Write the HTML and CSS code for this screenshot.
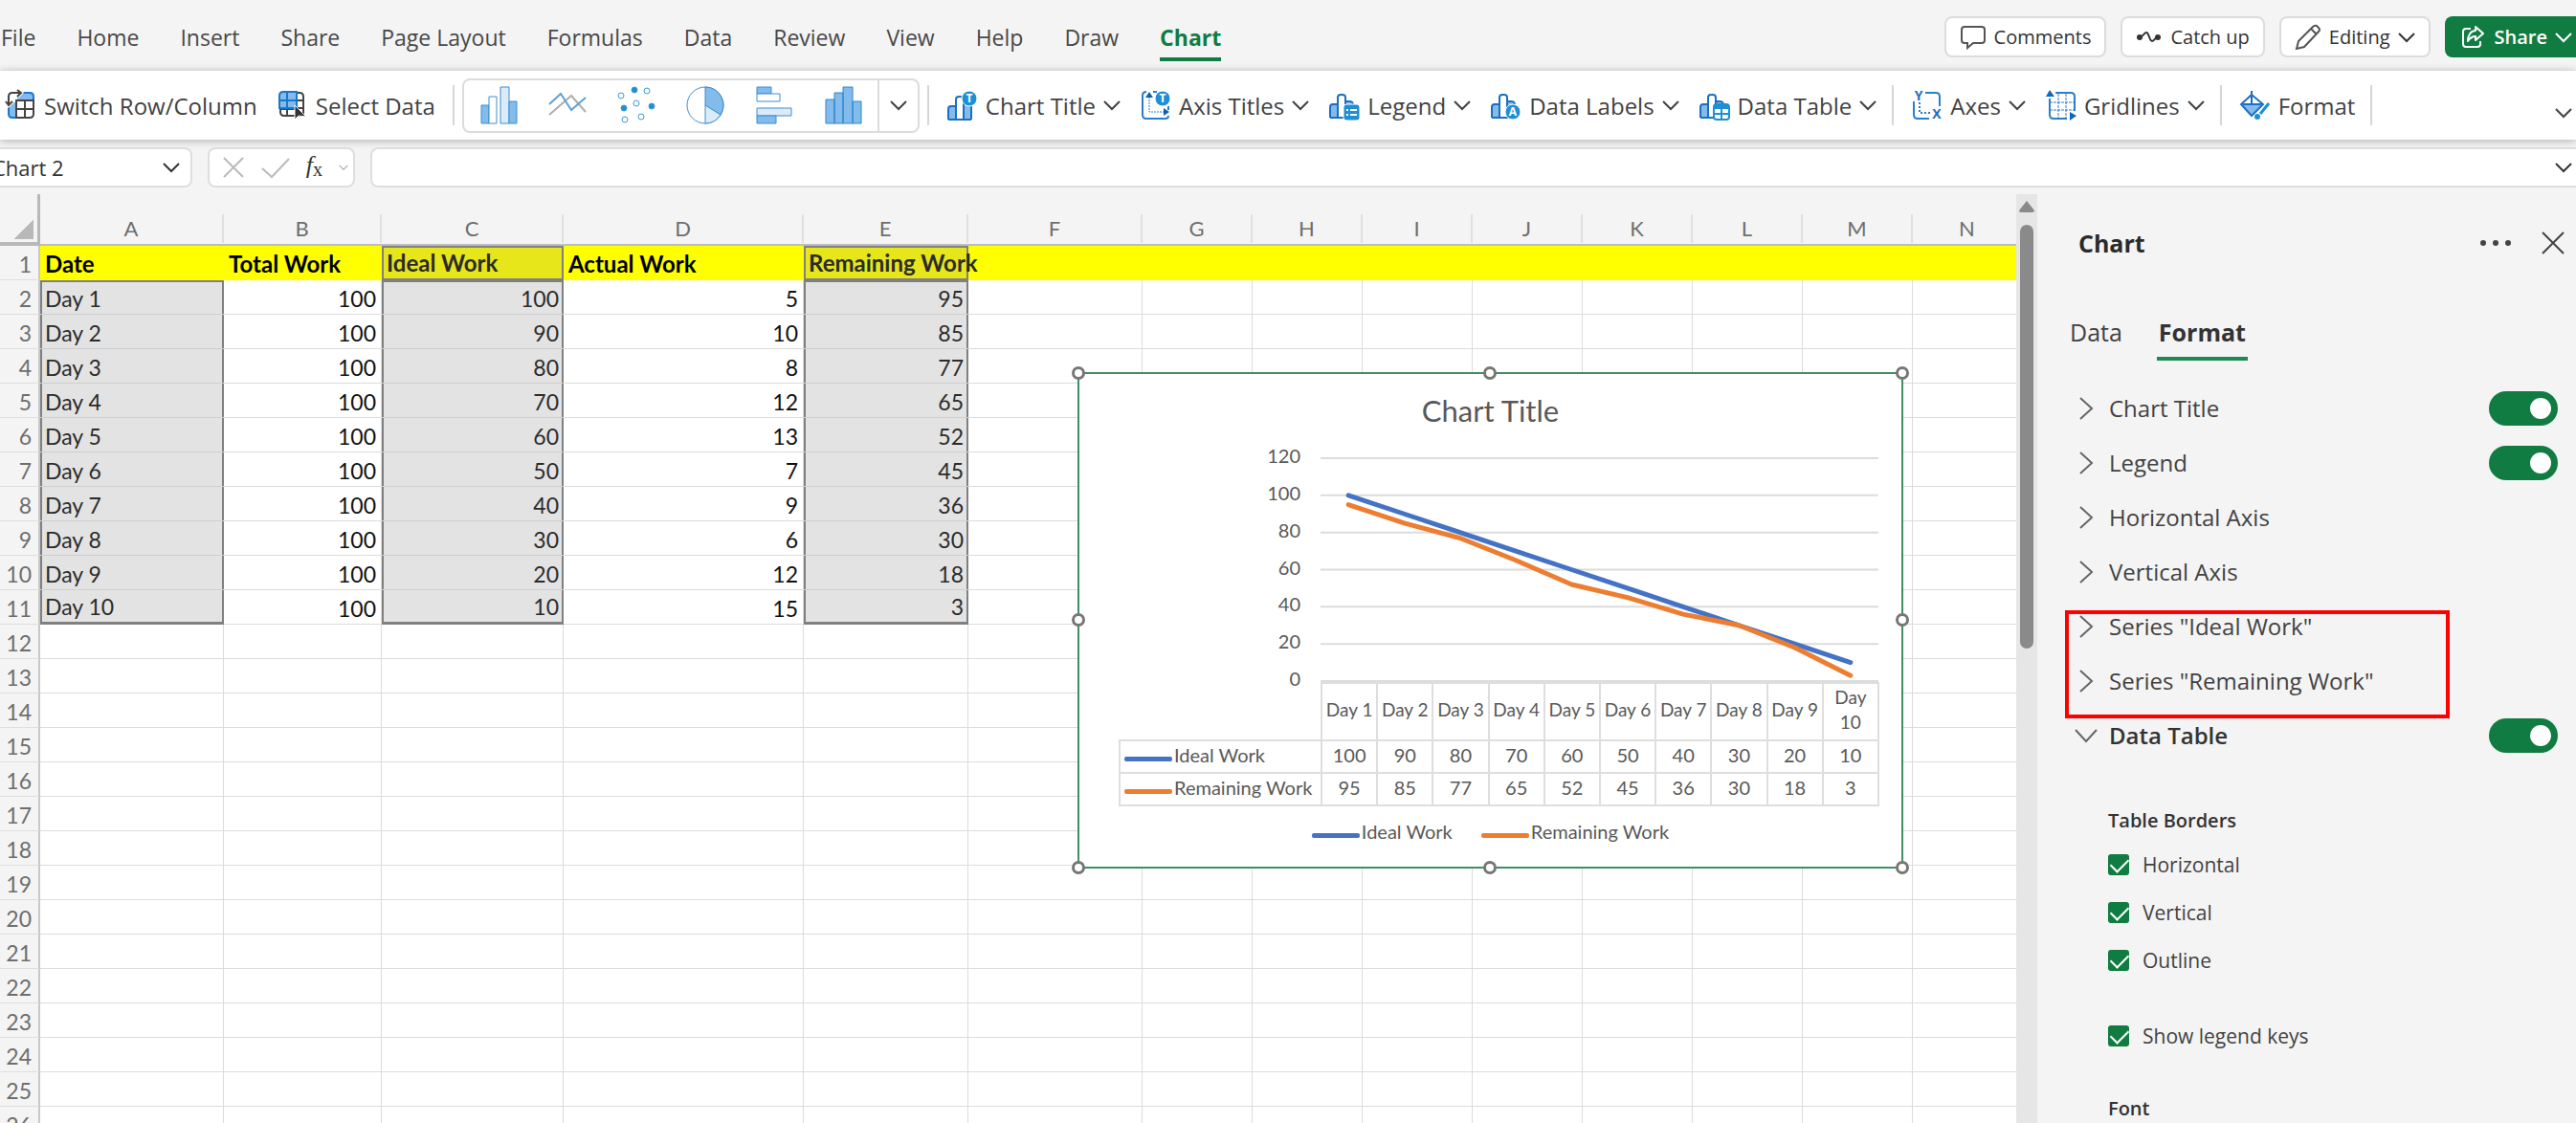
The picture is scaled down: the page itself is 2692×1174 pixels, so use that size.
FILE: index.html
```html
<!DOCTYPE html>
<html lang="en">
<head>
    <meta charset="UTF-8">
    <meta name="viewport" content="width=device-width, initial-scale=1.0">
    <title>Burndown chart</title>
    <link rel="stylesheet" href="styles.css">
</head>
<body>
    <!-- Shared icon shapes -->
    <svg class="defs" aria-hidden="true">
        <symbol id="chev-down" viewBox="0 0 18 18"><path d="M1 5l8 8 8-8" fill="none" stroke="currentColor" stroke-width="2"/></symbol>
        <symbol id="chev-right" viewBox="0 0 16 24"><path d="M2 1l12 11L2 23" fill="none" stroke="currentColor" stroke-width="2"/></symbol>
        <symbol id="close" viewBox="0 0 24 24"><path d="M1 1l22 22M23 1L1 23" fill="none" stroke="currentColor" stroke-width="2"/></symbol>
        <symbol id="mini-bars" viewBox="0 0 32 32">
            <path d="M1 29V18q0-3 3-3h4v14z" fill="#83bbec"/>
            <path d="M17 13h4q4 0 4 4v12h-8z" fill="#83bbec"/>
            <path d="M1 29V18q0-3 3-3h5M9 29V8q0-3 3-3h2q3 0 3 3v21M17 12h4q4 0 4 4v13M1 29h24" fill="none" stroke="#1b6fc0" stroke-width="2"/>
        </symbol>
    </svg>

    <header class="tabs-bar">
        <nav class="menu">
            <a href="#">File</a>
            <a href="#">Home</a>
            <a href="#">Insert</a>
            <a href="#">Share</a>
            <a href="#">Page Layout</a>
            <a href="#">Formulas</a>
            <a href="#">Data</a>
            <a href="#">Review</a>
            <a href="#">View</a>
            <a href="#">Help</a>
            <a href="#">Draw</a>
            <a href="#" class="active">Chart</a>
        </nav>
        <div class="actions">
            <button class="action">
                <svg width="28" height="28" viewBox="0 0 28 28"><path d="M5 3h18q3 0 3 3v11q0 3-3 3H14l-6 5v-5H5q-3 0-3-3V6q0-3 3-3z" fill="none" stroke="#555" stroke-width="2"/></svg>
                Comments
            </button>
            <button class="action">
                <svg width="28" height="28" viewBox="0 0 28 28"><path d="M4 14c4 0 4-5 7-5s3 9 6 9 3-5 7-5" fill="none" stroke="#333" stroke-width="2"/><circle cx="4" cy="14" r="3" fill="#333"/><circle cx="23" cy="14" r="3" fill="#333"/></svg>
                Catch up
            </button>
            <button class="action">
                <svg width="28" height="28" viewBox="0 0 28 28"><path d="M2 26l2-8L19 3q2-2 4-1l2 2q2 2 0 4L10 24zM17 5l6 6" fill="none" stroke="#555" stroke-width="2"/></svg>
                Editing
                <svg class="chev"><use href="#chev-down"/></svg>
            </button>
            <button class="action share">
                <svg width="28" height="28" viewBox="0 0 28 28"><path d="M11 5H6q-3 0-3 3v13q0 3 3 3h12q3 0 3-3v-3M16 3l8 7-8 7v-4c-4 0-6 2-8 5 0-6 3-11 8-11z" fill="none" stroke="#fff" stroke-width="2" stroke-linejoin="round"/></svg>
                Share
                <svg class="chev"><use href="#chev-down"/></svg>
            </button>
        </div>
    </header>

    <div class="ribbon">
        <button class="tool">
            <svg class="tool-icon" viewBox="0 0 32 32">
                <path d="M12 3h13q4 0 4 4v4H12v18H7q-4 0-4-4V13h9z" fill="#83bbec"/>
                <path d="M16 3h9q4 0 4 4v4M3 16v9q0 4 4 4h4" fill="none" stroke="#1b78c8" stroke-width="2"/>
                <path d="M11 11h18v14q0 4-4 4H11zM20 11v18M11 20h18" fill="none" stroke="#444" stroke-width="2"/>
                <path d="M3 15V7q0-4 4-4h8M12 0l4 3-4 4M0 12l3 4 4-4" fill="none" stroke="#fff" stroke-width="4"/>
                <path d="M3 15V7q0-4 4-4h8M12 0l4 3-4 4M0 12l3 4 4-4" fill="none" stroke="#444" stroke-width="2"/>
            </svg>
            Switch Row/Column
        </button>
        <button class="tool select-data">
            <svg class="tool-icon" viewBox="0 0 32 32">
                <path d="M21 3h2q4 0 4 4v18q0 2-2 2H7q-4 0-4-4v-3M10 19v8M19 19v8M19 11h8M19 19h8M3 20h17" fill="none" stroke="#444" stroke-width="2"/>
                <path d="M2 19V6q0-4 4-4h14v17z" fill="#83bbec" stroke="#1b78c8" stroke-width="2"/>
                <path d="M10 2v17M2 11h18" stroke="#1b78c8" stroke-width="2"/>
                <path d="M18 16v15l4-4 8 1z" fill="#333" stroke="#fff"/>
            </svg>
            Select Data
        </button>
        <span class="sep"></span>
        <div class="gallery">
            <button aria-label="Column"><svg class="type" viewBox="0 0 40 40" stroke="#3d8fd1" stroke-width="1"><path d="M2 20h8v19H2z" fill="#83bbec"/><path d="M10 11h8v28h-8z" fill="#fff"/><path d="M22 1h9v38h-9z" fill="#dcebf8"/><path d="M31 16h8v23h-8z" fill="#83bbec"/></svg></button>
            <button aria-label="Line"><svg class="type" viewBox="0 0 40 40" fill="none" stroke-width="2"><path d="M1 30L24 10l15 17" stroke="#b0aeac"/><path d="M1 19L13 8l11 17 15-13" stroke="#5aa2dc"/></svg></button>
            <button aria-label="Scatter"><svg class="type" viewBox="0 0 40 40" fill="#fff" stroke="#3f9bd7"><circle cx="4" cy="10" r="3"/><circle cx="31" cy="5" r="3"/><circle cx="20" cy="18" r="3"/><circle cx="8" cy="35" r="3"/><circle cx="25" cy="32" r="3"/><g fill="#1e8fd4"><circle cx="18" cy="4" r="3"/><circle cx="7" cy="23" r="3"/><circle cx="36" cy="21" r="3"/></g></svg></button>
            <button aria-label="Pie"><svg class="type" viewBox="0 0 40 40" stroke="#3d8fd1"><circle cx="20" cy="20" r="19" fill="#fff"/><path d="M20 20V1a19 19 0 0 1 16 29z" fill="#83bbec"/><path d="M20 20l16 10a19 19 0 0 1-16 9z" fill="#dcebf8"/></svg></button>
            <button aria-label="Bar"><svg class="type" viewBox="0 0 40 40" stroke="#3d8fd1"><path d="M2 1h15v7H2z" fill="#83bbec"/><path d="M2 8h24v8H2z" fill="#fff"/><path d="M2 23h36v8H2z" fill="#dcebf8"/><path d="M2 31h20v8H2z" fill="#83bbec"/></svg></button>
            <button aria-label="Histogram"><svg class="type" viewBox="0 0 40 40" stroke="#2e86cc" fill="#83bbec"><path d="M2 14h9v25H2zM11 7h9v32h-9zM20 1h10v38H20zM30 16h9v23h-9z"/></svg></button>
            <button class="more" aria-label="More chart types"><svg class="chev"><use href="#chev-down"/></svg></button>
        </div>
        <span class="sep"></span>
        <button class="tool">
            <svg class="tool-icon" viewBox="0 0 32 32"><use href="#mini-bars" y="2"/><circle cx="23" cy="9" r="8" fill="#1e8fd4" stroke="#fff"/><text x="23" y="13" class="glyph">T</text></svg>
            Chart Title <svg class="chev"><use href="#chev-down"/></svg>
        </button>
        <button class="tool">
            <svg class="tool-icon" viewBox="0 0 32 32">
                <path d="M6 2q-4 0-4 4v20q0 4 4 4h20q3 0 3-3M13 2h4M29 17v4" fill="none" stroke="#2b7fc9" stroke-width="2"/>
                <path d="M9 7v16h16" fill="none" stroke="#2b7fc9" stroke-dasharray="2 1"/>
                <path d="M5 8l4-6 4 6zM24 19l6 4-6 4z" fill="#0f5fae"/>
                <circle cx="23" cy="9" r="8" fill="#1e8fd4" stroke="#fff"/><text x="23" y="13" class="glyph">T</text>
            </svg>
            Axis Titles <svg class="chev"><use href="#chev-down"/></svg>
        </button>
        <button class="tool">
            <svg class="tool-icon" viewBox="0 0 32 32"><use href="#mini-bars"/><rect x="15" y="15" width="17" height="17" rx="3" fill="#1e8fd4" stroke="#fff"/><path d="M18 21h2M22 21h7M18 26h2M22 26h7" stroke="#fff" stroke-width="2"/></svg>
            Legend <svg class="chev"><use href="#chev-down"/></svg>
        </button>
        <button class="tool">
            <svg class="tool-icon" viewBox="0 0 32 32"><use href="#mini-bars"/><circle cx="23" cy="23" r="8" fill="#1e8fd4" stroke="#fff"/><text x="23" y="27" class="glyph">A</text></svg>
            Data Labels <svg class="chev"><use href="#chev-down"/></svg>
        </button>
        <button class="tool">
            <svg class="tool-icon" viewBox="0 0 32 32"><use href="#mini-bars"/><rect x="15" y="15" width="16" height="16" rx="3" fill="#fff" stroke="#1e8fd4" stroke-width="2"/><path d="M15 16h16v4H15z" fill="#1e8fd4"/><path d="M23 18v13M15 25h16" stroke="#1e8fd4" stroke-width="2"/></svg>
            Data Table <svg class="chev"><use href="#chev-down"/></svg>
        </button>
        <span class="sep"></span>
        <button class="tool">
            <svg class="tool-icon" viewBox="0 0 32 32">
                <path d="M14 3h11q4 0 4 4v10M2 12v14q0 4 4 4h12" fill="none" stroke="#2b7fc9" stroke-width="2"/>
                <path d="M8 13v11h11" fill="none" stroke="#2b7fc9" stroke-width="2" stroke-dasharray="2 2"/>
                <text x="7" y="11" class="letter">Y</text><text x="26" y="30" class="letter">X</text>
            </svg>
            Axes <svg class="chev"><use href="#chev-down"/></svg>
        </button>
        <button class="tool">
            <svg class="tool-icon" viewBox="0 0 32 32">
                <path d="M10 3h16q4 0 4 4v15M4 9v17q0 4 4 4h14" fill="none" stroke="#2b7fc9" stroke-width="2"/>
                <path d="M13 4v26M21 4v26M4 13h25M4 21h25" stroke="#2b7fc9" stroke-dasharray="3 1"/>
                <path d="M0 7l4-7 5 7zM25 23l7 4-7 5z" fill="#0f68b8"/>
            </svg>
            Gridlines <svg class="chev"><use href="#chev-down"/></svg>
        </button>
        <span class="sep"></span>
        <button class="tool">
            <svg class="tool-icon" viewBox="0 0 32 32">
                <path d="M2 15h21L12 26z" fill="#83bbec"/>
                <path d="M12 1v13M12 5L1 15l11 12L24 15zM3 15h19" fill="none" stroke="#1b6fc0" stroke-width="2"/>
                <path d="M31 13L20 26" stroke="#fff" stroke-width="5"/><path d="M30 14l-9 11" stroke="#1e8fd4" stroke-width="3"/>
                <circle cx="18" cy="28" r="3" fill="#1e8fd4"/>
            </svg>
            Format
        </button>
        <span class="sep"></span>
        <button class="collapse" aria-label="Collapse ribbon"><svg class="chev"><use href="#chev-down"/></svg></button>
    </div>

    <div class="formula-bar">
        <div class="name-box">
            <input type="text" value="Chart 2" aria-label="Name box">
            <svg class="chev"><use href="#chev-down"/></svg>
        </div>
        <div class="fx-box">
            <button aria-label="Cancel"><svg width="24" height="24" viewBox="0 0 24 24"><path d="M2 2l20 20M22 2L2 22" stroke="#bbb" stroke-width="2"/></svg></button>
            <button aria-label="Enter"><svg width="30" height="24" viewBox="0 0 30 24"><path d="M1 13l10 9L29 3" fill="none" stroke="#bbb" stroke-width="2"/></svg></button>
            <button class="fx" aria-label="Insert function"><i>f</i><sub>x</sub></button>
            <svg class="chev-small"><use href="#chev-down"/></svg>
        </div>
        <div class="formula-box">
            <input type="text" aria-label="Formula">
            <svg class="chev"><use href="#chev-down"/></svg>
        </div>
    </div>

    <main class="workspace">
        <div class="sheet">
            <table class="grid">
                <colgroup>
                    <col class="w-head"><col class="w-a"><col class="w-b"><col class="w-c"><col class="w-d"><col class="w-e"><col class="w-f">
                    <col class="w-std" span="8">
                </colgroup>
                <thead><tr id="letters"></tr></thead>
                <tbody id="rows"></tbody>
            </table>

            <!-- Chart object placed on the sheet -->
            <section class="chart">
                <h2>Chart Title</h2>
                <svg class="plot" viewBox="0 0 859 250" id="plot"></svg>
                <table class="chart-table">
                    <thead><tr id="chart-days"><td class="blank"></td></tr></thead>
                    <tbody id="chart-rows"></tbody>
                </table>
                <div class="legend">
                    <span><i class="key blue"></i>Ideal Work</span>
                    <span><i class="key orange"></i>Remaining Work</span>
                </div>
                <i class="handle tl"></i><i class="handle tc"></i><i class="handle tr"></i>
                <i class="handle ml"></i><i class="handle mr"></i>
                <i class="handle bl"></i><i class="handle bc"></i><i class="handle br"></i>
            </section>
        </div>

        <div class="scrollbar">
            <svg width="16" height="12" viewBox="0 0 16 12"><path d="M8 0l8 10q0 2-2 2H2q-2 0-2-2z" fill="#8a8a8a"/></svg>
            <div class="thumb"></div>
        </div>

        <aside class="panel">
            <div class="panel-head">
                <h1>Chart</h1>
                <button aria-label="More options"><svg width="32" height="8" viewBox="0 0 32 8" fill="#444"><circle cx="3" cy="4" r="3"/><circle cx="16" cy="4" r="3"/><circle cx="29" cy="4" r="3"/></svg></button>
                <button aria-label="Close"><svg width="24" height="24"><use href="#close"/></svg></button>
            </div>
            <div class="panel-tabs">
                <button>Data</button>
                <button class="active">Format</button>
            </div>
            <div class="option"><svg class="arrow"><use href="#chev-right"/></svg><label for="t-title">Chart Title</label><input type="checkbox" class="toggle" id="t-title" checked></div>
            <div class="option"><svg class="arrow"><use href="#chev-right"/></svg><label for="t-legend">Legend</label><input type="checkbox" class="toggle" id="t-legend" checked></div>
            <div class="option"><svg class="arrow"><use href="#chev-right"/></svg><span>Horizontal Axis</span></div>
            <div class="option"><svg class="arrow"><use href="#chev-right"/></svg><span>Vertical Axis</span></div>
            <div class="marked">
                <div class="option"><svg class="arrow"><use href="#chev-right"/></svg><span>Series "Ideal Work"</span></div>
                <div class="option"><svg class="arrow"><use href="#chev-right"/></svg><span>Series "Remaining Work"</span></div>
            </div>
            <div class="option open"><svg class="arrow"><use href="#chev-right"/></svg><label for="t-table">Data Table</label><input type="checkbox" class="toggle" id="t-table" checked></div>
            <div class="details">
                <h3>Table Borders</h3>
                <div class="checks">
                    <label><input type="checkbox" checked>Horizontal</label>
                    <label><input type="checkbox" checked>Vertical</label>
                    <label><input type="checkbox" checked>Outline</label>
                </div>
                <div class="checks keys">
                    <label><input type="checkbox" checked>Show legend keys</label>
                </div>
                <h3>Font</h3>
            </div>
        </aside>
    </main>

    <script>
        const days = ['Day 1', 'Day 2', 'Day 3', 'Day 4', 'Day 5', 'Day 6', 'Day 7', 'Day 8', 'Day 9', 'Day 10'];
        const ideal = [100, 90, 80, 70, 60, 50, 40, 30, 20, 10];
        const actual = [5, 10, 8, 12, 13, 7, 9, 6, 12, 15];
        const remaining = [95, 85, 77, 65, 52, 45, 36, 30, 18, 3];
        const columns = 'ABCDEFGHIJKLMN'.split('');

        // Sheet header and rows
        document.getElementById('letters').innerHTML = '<th class="corner"></th>' +
            columns.map(c => `<th><span>${c}</span></th>`).join('');

        const data = [['Date', 'Total Work', 'Ideal Work', 'Actual Work', 'Remaining Work']];
        days.forEach((d, i) => data.push([d, 100, ideal[i], actual[i], remaining[i]]));

        let html = '';
        for (let r = 0; r < 26; r++) {
            html += `<tr class="${r === 0 ? 'title-row' : ''}"><th>${r + 1}</th>`;
            columns.forEach((c, i) => {
                const value = data[r] && data[r][i] !== undefined ? data[r][i] : '';
                const classes = [];
                if (typeof value === 'number') classes.push('num');
                if (r < 11 && (c === 'C' || c === 'E' || (c === 'A' && r > 0))) {
                    classes.push('range');
                    if (r === 1) classes.push('first');
                    if (r === 10) classes.push('last');
                }
                html += `<td class="${classes.join(' ')}">${value}</td>`;
            });
            html += '</tr>';
        }
        document.getElementById('rows').innerHTML = html;

        // Line plot
        const left = 252, right = 835, top0 = 16, bottom = 249;
        const y = v => bottom - v * (bottom - top0) / 120;
        const x = i => left + (i + 0.5) * (right - left) / 10;
        let plot = '';
        for (let v = 0; v <= 120; v += 20) {
            plot += `<line x1="${left}" x2="${right}" y1="${y(v)}" y2="${y(v)}" class="gridline"/>`;
            plot += `<text x="231" y="${y(v) + 5}" class="tick">${v}</text>`;
        }
        const line = (values, cls) =>
            `<polyline class="${cls}" points="${values.map((v, i) => x(i) + ',' + y(v)).join(' ')}"/>`;
        plot += line(ideal, 'line-blue') + line(remaining, 'line-orange');
        document.getElementById('plot').innerHTML = plot;

        // Data table below the plot
        document.getElementById('chart-days').innerHTML += days.map(d => `<th>${d}</th>`).join('');
        const row = (name, color, values) =>
            `<tr><th><i class="key ${color}"></i>${name}</th>${values.map(v => `<td>${v}</td>`).join('')}</tr>`;
        document.getElementById('chart-rows').innerHTML =
            row('Ideal Work', 'blue', ideal) + row('Remaining Work', 'orange', remaining);
    </script>
</body>
</html>
```
FILE: styles.css
```css
* {
    box-sizing: border-box;
}
body {
    margin: 0;
    height: 100vh;
    display: flex;
    flex-direction: column;
    overflow: hidden;
    background-color: #f4f4f4;
    color: #424242;
    font-family: "Open Sans", "Noto Sans", sans-serif;
    font-size: 24px;
}
button, input {
    font: inherit;
    color: inherit;
    border: none;
    background: none;
    padding: 0;
    margin: 0;
}
svg {
    flex: none;
    display: block;
}
.defs {
    position: absolute;
    width: 0;
    height: 0;
}
.chev {
    width: 18px;
    height: 18px;
}

/* Top menu */
.tabs-bar {
    height: 74px;
    flex: none;
    display: flex;
    justify-content: space-between;
    align-items: flex-start;
}
.menu {
    display: flex;
    gap: 43px;
    padding: 22px 0 0 1px;
    font-size: 23px;
    line-height: 34px;
}
.menu a {
    color: #484848;
    text-decoration: none;
    white-space: nowrap;
}
.menu .active {
    color: #107c41;
    font-weight: 700;
    padding-bottom: 4px;
    border-bottom: 4px solid #107c41;
}
.actions {
    display: flex;
    gap: 15px;
    padding-top: 17px;
}
.action {
    height: 43px;
    display: flex;
    align-items: center;
    gap: 8px;
    padding: 0 14px;
    border: 2px solid #dcdcdc;
    border-radius: 8px;
    background-color: #fff;
    font-size: 20px;
    color: #333;
}
.share {
    border-color: #107c41;
    border-right: none;
    border-radius: 8px 0 0 8px;
    background-color: #107c41;
    color: #fff;
    font-weight: 600;
    padding-right: 4px;
}

/* Ribbon */
.ribbon {
    height: 72px;
    flex: none;
    display: flex;
    align-items: center;
    padding: 0 4px 0 6px;
    background-color: #fff;
    box-shadow: 0 1px 8px #aaa;
}
.tool {
    display: flex;
    align-items: center;
    gap: 8px;
    margin-right: 21px;
    font-size: 24px;
    white-space: nowrap;
}
.tool-icon {
    width: 32px;
    height: 32px;
    overflow: visible;
}
.select-data {
    margin-right: 0;
}
.glyph {
    fill: #fff;
    font-size: 12px;
    font-weight: 700;
    text-anchor: middle;
}
.letter {
    fill: #1b6fc0;
    font-size: 14px;
    font-weight: 700;
    text-anchor: middle;
}
.sep {
    width: 2px;
    height: 42px;
    background-color: #d6d6d6;
    margin-right: 19px;
}
.tool + .sep {
    margin-left: -5px;
}
.select-data + .sep {
    margin: 0 8px 0 18px;
}
.gallery {
    display: flex;
    height: 57px;
    margin-right: 8px;
    border: 2px solid #dcdcdc;
    border-radius: 8px;
}
.gallery button {
    width: 72px;
    display: flex;
    align-items: center;
    justify-content: center;
}
.gallery .more {
    width: 42px;
    border-left: 2px solid #dcdcdc;
}
.type {
    width: 40px;
    height: 40px;
}
.collapse {
    margin-left: auto;
    padding-top: 16px;
}

/* Formula bar */
.formula-bar {
    flex: none;
    display: flex;
    gap: 16px;
    padding: 8px 0 7px;
    font-size: 22px;
    color: #333;
}
.name-box, .fx-box, .formula-box {
    height: 42px;
    display: flex;
    align-items: center;
    border: 2px solid #dedede;
    border-radius: 8px;
    background-color: #fff;
}
.name-box {
    width: 213px;
    margin-left: -12px;
    padding-right: 11px;
}
.name-box input, .formula-box input {
    flex: 1;
    min-width: 0;
}
.name-box input {
    padding-left: 2px;
}
.fx-box {
    width: 154px;
    justify-content: space-between;
    padding: 0 5px 0 13px;
}
.fx {
    font-family: "Liberation Serif", serif;
    font-size: 26px;
    line-height: 32px;
}
.fx sub {
    font-size: 20px;
    vertical-align: -3px;
}
.chev-small {
    width: 10px;
    height: 10px;
    color: #aaa;
}
.formula-box {
    flex: 1;
    border-right: none;
    border-radius: 8px 0 0 8px;
    padding-right: 4px;
}

/* Sheet */
.workspace {
    flex: 1;
    min-height: 0;
    display: flex;
}
.sheet {
    position: relative;
    flex: 1;
    min-width: 0;
    overflow: hidden;
    font-family: Lato, "Open Sans", sans-serif;
}
.grid {
    width: 100%;
    table-layout: fixed;
    border-spacing: 0;
    background-color: #fff;
    font-size: 23px;
    line-height: 30px;
}
.w-head { width: 42px; }
.w-a { width: 192px; }
.w-b { width: 165px; }
.w-c { width: 190px; }
.w-d { width: 251px; }
.w-e { width: 172px; }
.w-f { width: 182px; }
.w-std { width: 115px; }
.grid th {
    padding: 0;
    background-color: #f4f4f4;
    color: #6e6e6e;
    font-weight: 400;
}
.grid thead th {
    height: 54px;
    padding-top: 20px;
    font-size: 22px;
    border-bottom: 2px solid #bdbdbd;
}
.grid thead span {
    display: block;
    border-right: 2px solid #e0e0e0;
}
.grid thead .corner {
    padding: 0;
    border-right: 3px solid #b8b8b8;
    border-bottom: 4px solid #b8b8b8;
    background: linear-gradient(to bottom right, transparent 50%, #b8b8b8 50%) 14px 26px / 21px 21px no-repeat #f4f4f4;
}
.grid tbody th {
    padding: 3px 7px 0 0;
    text-align: right;
    border-right: 2px solid #c8c8c8;
    border-bottom: 1px solid #dedede;
}
.grid tbody td {
    height: 36px;
    padding: 3px 5px 0;
    border-right: 1px solid #dcdcdc;
    border-bottom: 1px solid #dcdcdc;
    color: #111;
    white-space: nowrap;
}
.grid tbody .num {
    text-align: right;
}
.grid .title-row td {
    background-color: #ff0;
    border-color: #ff0;
    color: #000;
    font-weight: 700;
    font-size: 24px;
}
.grid tbody .range {
    background-color: #e3e3e3;
    border-right: none;
    border-bottom-color: #cfcfcf;
    color: #2b2b2b;
    box-shadow: inset 2px 0 #808080, inset -2px 0 #808080;
}
.grid tbody .first {
    box-shadow: inset 2px 0 #808080, inset -2px 0 #808080, inset 0 2px #808080;
}
.grid tbody .last {
    padding-top: 1px;
    border-bottom: 3px solid #808080;
}
.grid .title-row .range {
    padding-top: 0;
    background-color: #e6e61a;
    border-top: 2px solid #808080;
    border-bottom: 2px solid #808080;
}

/* Chart object */
.chart {
    position: absolute;
    left: 1126px;
    top: 186px;
    width: 863px;
    height: 519px;
    border: 2px solid #3f8f63;
    background-color: #fff;
    color: #595959;
    font-size: 20px;
}
.chart h2 {
    margin: 19px 0 15px;
    font-size: 31px;
    line-height: 38px;
    font-weight: 400;
    text-align: center;
}
.plot {
    width: 100%;
    overflow: visible;
}
.gridline {
    stroke: #dcdcdc;
    stroke-width: 2;
}
.tick {
    fill: #595959;
    text-anchor: end;
}
.line-blue, .line-orange {
    fill: none;
    stroke-width: 5;
    stroke-linecap: round;
    stroke-linejoin: round;
}
.line-blue { stroke: #4472c4; }
.line-orange { stroke: #ed7d31; }
.chart-table {
    width: 795px;
    margin-left: 41px;
    table-layout: fixed;
    border-collapse: collapse;
    line-height: 26px;
}
.chart-table th, .chart-table td {
    height: 34px;
    padding: 0 0 4px;
    border: 2px solid #dedede;
    font-weight: 400;
    text-align: center;
}
.chart-table thead th {
    height: 60px;
    font-size: 19px;
}
.chart-table .blank {
    width: 211px;
    border-top: none;
    border-left: none;
}
.chart-table tbody th {
    text-align: left;
    padding-left: 4px;
    white-space: nowrap;
}
.key {
    display: inline-block;
    width: 50px;
    height: 5px;
    margin-right: 2px;
    border-radius: 2px;
    vertical-align: 1px;
}
.blue { background-color: #4472c4; }
.orange { background-color: #ed7d31; }
.legend {
    display: flex;
    justify-content: center;
    gap: 30px;
    margin-top: 12px;
    line-height: 28px;
}
.handle {
    position: absolute;
    width: 14px;
    height: 14px;
    margin: -8px;
    border: 3px solid #767676;
    border-radius: 50%;
    background-color: #fff;
}
.tl, .tc, .tr { top: 0; }
.ml, .mr { top: 50%; }
.bl, .bc, .br { bottom: 0; }
.tl, .ml, .bl { left: 0; }
.tc, .bc { left: 50%; }
.tr, .mr, .br { right: 0; }

.scrollbar {
    width: 22px;
    padding-top: 7px;
    display: flex;
    flex-direction: column;
    align-items: center;
    gap: 13px;
    background-color: #e6e6e6;
}
.thumb {
    width: 14px;
    height: 46%;
    border-radius: 7px;
    background-color: #8a8a8a;
}

/* Format panel */
.panel {
    width: 563px;
    flex: none;
    padding: 34px 19px 0 43px;
    overflow: hidden;
}
.panel-head {
    display: flex;
    align-items: center;
    gap: 32px;
    height: 34px;
    margin-right: -7px;
}
.panel-head h1 {
    flex: 1;
    margin: 0;
    font-size: 25px;
    line-height: 34px;
    font-weight: 700;
    color: #2b2b2b;
}
.panel-tabs {
    display: flex;
    gap: 34px;
    margin: 60px 0 21px -9px;
    font-size: 25px;
    line-height: 32px;
}
.panel-tabs button {
    padding: 0 2px 10px 0;
    border-bottom: 4px solid transparent;
}
.panel-tabs .active {
    padding-left: 2px;
    border-color: #1f8a50;
    font-weight: 700;
    color: #333;
}
.option {
    display: flex;
    align-items: center;
    height: 57px;
}
.option label, .option span {
    flex: 1;
    margin-left: 16px;
}
.arrow {
    width: 16px;
    height: 24px;
    color: #666;
}
.open .arrow {
    transform: rotate(90deg);
}
.open label {
    font-weight: 600;
    color: #333;
}
.toggle {
    appearance: none;
    width: 72px;
    height: 36px;
    padding: 7px;
    border-radius: 18px;
    background-color: #107c41;
}
.toggle::before {
    content: "";
    display: block;
    width: 22px;
    height: 22px;
    margin-left: auto;
    border-radius: 50%;
    background-color: #fff;
}
.marked {
    position: relative;
}
.marked::after {
    content: "";
    position: absolute;
    top: 12px;
    bottom: -11px;
    left: -14px;
    right: 113px;
    border: 4px solid #f00;
}
.details {
    padding: 47px 0 0 31px;
    font-size: 21px;
    line-height: 28px;
}
.details h3 {
    margin: 0;
    font-size: 20px;
    line-height: 28px;
    font-weight: 600;
    color: #333;
}
.checks {
    display: grid;
    gap: 22px;
    margin-top: 18px;
}
.keys {
    margin: 51px 0 48px;
}
.checks label {
    display: flex;
    align-items: center;
    gap: 14px;
}
.checks input {
    appearance: none;
    width: 22px;
    height: 22px;
    border-radius: 3px;
    background-color: #107c41;
}
.checks input::before {
    content: "";
    display: block;
    width: 16px;
    height: 9px;
    margin: 4px 0 0 3px;
    border: 2px solid #fff;
    border-top: none;
    border-right: none;
    transform: rotate(-45deg);
}
```
